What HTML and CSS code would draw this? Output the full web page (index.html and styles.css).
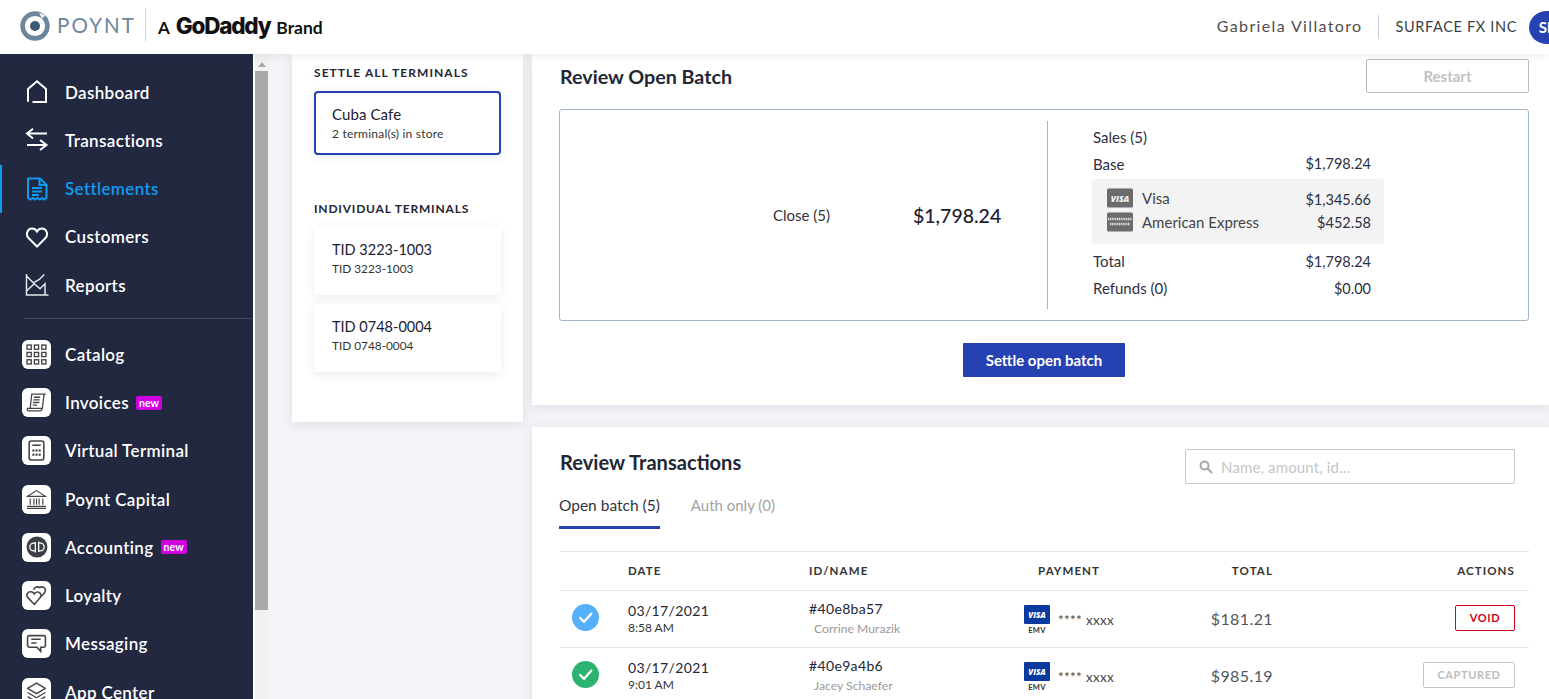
FILE: index.html
```html
<!DOCTYPE html>
<html lang="en">
<head>
<meta charset="utf-8">
<title>Poynt Settlements</title>
<link rel="stylesheet" href="styles.css">
</head>
<body>
<svg class="defs" width="0" height="0" aria-hidden="true">
  <symbol id="visa-blue" viewBox="0 0 26 19"><rect width="26" height="19" rx="1" fill="#0b3a9e"/><text x="13" y="12.5" text-anchor="middle" class="visa-txt">VISA</text></symbol>
  <symbol id="check" viewBox="0 0 28 28"><path d="M8.5 14.5l4 4 7.5-8.5" fill="none" stroke="#fff" stroke-width="2.4" stroke-linecap="round" stroke-linejoin="round"/></symbol>
</svg>
<header class="topbar">
  <div class="brand">
    <svg class="poynt-mark" viewBox="0 0 30 30"><circle cx="15" cy="15" r="12.4" fill="none" stroke="#6d869c" stroke-width="4.6"/><circle cx="15" cy="15" r="5" fill="#3e5a75"/><path d="M19 1.5l6 3-3 3z" fill="#fff"/></svg>
    <span class="poynt-word">POYNT</span>
    <span class="brand-sep"></span>
    <span class="brand-a">A</span>
    <span class="brand-gd">GoDaddy</span>
    <span class="brand-b">Brand</span>
  </div>
  <div class="account">
    <span class="user">Gabriela Villatoro</span>
    <span class="acc-sep"></span>
    <span class="merchant">SURFACE FX INC</span>
    <span class="avatar">SF</span>
  </div>
</header>
<div class="shell">
  <nav class="sidebar">
    <a class="nav-item"><span class="nav-ico"><svg viewBox="0 0 24 24" class="line"><path d="M3 21.800V9L12 1.300 21 9v12.800"/><path d="M7.500 22h14.500"/></svg></span>Dashboard</a>
    <a class="nav-item"><span class="nav-ico"><svg viewBox="0 0 24 24" class="line"><path d="M22 5.500H3M8 .8L2 5.500l6 5"/><path d="M2 17h19M15 12l6.500 5-6.500 5"/></svg></span>Transactions</a>
    <a class="nav-item active"><span class="nav-ico"><svg viewBox="0 0 24 24" class="line"><path d="M3 21V1.500h12L21.500 8v13l-2.200 1.500-2.200-1.500-2.300 1.500-2.300-1.500-2.300 1.500-2.300-1.500-2.300 1.500z"/><path d="M14.500 1.500V8h7M7 11h10M7 14.500h10M7 18h7"/></svg></span>Settlements</a>
    <a class="nav-item"><span class="nav-ico"><svg viewBox="0 0 24 24" class="line"><path d="M12 21.500L3.500 13C.5 10 2 3.500 7.300 3.500c2.300 0 3.700 1.300 4.700 3 1-1.700 2.400-3 4.700-3C22 3.500 23.500 10 20.500 13z"/></svg></span>Customers</a>
    <a class="nav-item"><span class="nav-ico"><svg viewBox="0 0 24 24" class="line thin"><path d="M1.500 1v21h22"/><path d="M1.500 3l6.800 6.800 6-3.300 5-5"/><path d="M1.500 18l7.800-7.200 5.700 5 5-5v11"/></svg></span>Reports</a>
    <hr class="nav-rule">
    <a class="nav-item"><span class="tile"><svg viewBox="0 0 20 20" class="grid-ico"><g fill="none" stroke="#444" stroke-width="1.300"><rect x="1" y="1" width="4" height="4"/><rect x="8" y="1" width="4" height="4"/><rect x="15" y="1" width="4" height="4"/><rect x="1" y="8" width="4" height="4"/><rect x="8" y="8" width="4" height="4"/><rect x="15" y="8" width="4" height="4"/><rect x="1" y="15" width="4" height="4"/><rect x="8" y="15" width="4" height="4"/><rect x="15" y="15" width="4" height="4"/></g></svg></span>Catalog</a>
    <a class="nav-item"><span class="tile"><svg viewBox="0 0 20 20" class="grid-ico"><g fill="none" stroke="#444" stroke-width="1.200"><path d="M4 15.500L5.500 2H18l-1 1.500-1.500 12.500"/><path d="M1.500 15.500h14c-.5 2-1 2.500-2 2.500H2.500c-1 0-1.500-1-1-2.500z"/><path d="M7.500 5h6M7 7.500h6M6.800 10h6M6.500 12.500h4"/></g></svg></span>Invoices<span class="pill">new</span></a>
    <a class="nav-item"><span class="tile"><svg viewBox="0 0 20 20" class="grid-ico"><g fill="none" stroke="#444" stroke-width="1.500"><rect x="3" y="1" width="14" height="18" rx="2"/><path d="M6 5h8"/></g><g fill="#444"><rect x="6" y="9" width="2" height="2"/><rect x="9" y="9" width="2" height="2"/><rect x="12" y="9" width="2" height="2"/><rect x="6" y="13" width="2" height="2"/><rect x="9" y="13" width="2" height="2"/><rect x="12" y="13" width="2" height="2"/></g></svg></span>Virtual Terminal</a>
    <a class="nav-item"><span class="tile"><svg viewBox="0 0 20 20" class="grid-ico"><g fill="none" stroke="#444" stroke-width="1.100"><path d="M1.500 7L10 1.500 18.500 7z"/><path d="M4 9v6M7.500 9v6M12.500 9v6M16 9v6M10 9v6M1 16.500h18M1 18.500h18"/></g></svg></span>Poynt Capital</a>
    <a class="nav-item"><span class="tile"><svg viewBox="0 0 20 20" class="grid-ico qb"><circle cx="10" cy="10" r="9.500" fill="#3b3f45"/><path d="M8.500 5.500v9.500M8.500 6.500H7a3.200 3.200 0 0 0 0 7h1M11.500 5v9.500M11.500 13.500H13a3.200 3.200 0 0 0 0-7h-1.500" fill="none" stroke="#fff" stroke-width="1.200"/></svg></span>Accounting<span class="pill">new</span></a>
    <a class="nav-item"><span class="tile"><svg viewBox="0 0 20 20" class="grid-ico"><g fill="none" stroke="#444" stroke-width="1.500"><path d="M8 18.500L1.800 12C-.5 9.500 2 6 4.800 6.500 6 6.700 7.300 7.500 8 8.500 9 7 11 6 12.500 7c2 1.200 2.500 3.500 1 5z"/><path d="M7.500 4.500C8 2 11 1 13 2.500c2-1.500 5.500-.5 5.500 2.500 0 2-2 4-4 6"/></g></svg></span>Loyalty</a>
    <a class="nav-item"><span class="tile"><svg viewBox="0 0 20 20" class="grid-ico"><g fill="none" stroke="#444" stroke-width="1.500"><path d="M3 2.500h14a1.500 1.500 0 0 1 1.500 1.500v8a1.500 1.500 0 0 1-1.500 1.500h-3v4l-3.500-4H3A1.500 1.500 0 0 1 1.500 12V4A1.500 1.500 0 0 1 3 2.500z"/><path d="M5 6h9M5 9.500h5"/></g></svg></span>Messaging</a>
    <a class="nav-item"><span class="tile"><svg viewBox="0 0 20 20" class="grid-ico"><g fill="none" stroke="#444" stroke-width="1.300" stroke-linejoin="round"><path d="M10 1l8.500 5-8.500 5-8.500-5z"/><path d="M1.500 10l8.500 5 8.500-5M1.500 14l8.500 5 8.500-5"/></g></svg></span>App Center</a>
  </nav>
  <div class="scrollbar"><span class="sb-arrow"></span><span class="sb-thumb"></span></div>
  <main class="content">
    <aside class="terminals">
      <h3 class="term-head">SETTLE ALL TERMINALS</h3>
      <div class="term-card selected"><div class="term-name">Cuba Cafe</div><div class="term-sub">2 terminal(s) in store</div></div>
      <h3 class="term-head second">INDIVIDUAL TERMINALS</h3>
      <div class="term-card"><div class="term-name">TID 3223-1003</div><div class="term-sub">TID 3223-1003</div></div>
      <div class="term-card"><div class="term-name">TID 0748-0004</div><div class="term-sub">TID 0748-0004</div></div>
    </aside>
    <div class="panels">
      <section class="panel batch">
        <div class="batch-head">
          <h2 class="panel-title">Review Open Batch</h2>
          <button class="btn-restart">Restart</button>
        </div>
        <div class="batch-box">
          <div class="close-side"><span class="close-label">Close (5)</span><span class="close-amt">$1,798.24</span></div>
          <div class="v-rule"></div>
          <div class="totals">
            <div class="t-row t-sales"><span>Sales (5)</span></div>
            <div class="t-row t-base"><span>Base</span><span>$1,798.24</span></div>
            <div class="cards-band">
              <div class="band-names">
                <div class="band-name"><svg class="gray-card" viewBox="0 0 26 19"><rect width="26" height="19" rx="1.500" fill="#6b6b6b"/><text x="13" y="13" text-anchor="middle" class="visa-gray">VISA</text></svg>Visa</div>
                <div class="band-name"><svg class="gray-card" viewBox="0 0 26 19"><rect width="26" height="19" rx="1.500" fill="#6b6b6b"/><path d="M1 6.500h24M3 11.500h20" stroke="#ddd" stroke-width="2.600" stroke-dasharray="1.200 .6"/></svg>American Express</div>
              </div>
              <div class="band-amts"><div>$1,345.66</div><div>$452.58</div></div>
            </div>
            <div class="t-row t-total"><span>Total</span><span>$1,798.24</span></div>
            <div class="t-row t-refund"><span>Refunds (0)</span><span>$0.00</span></div>
          </div>
        </div>
        <div class="settle-wrap"><button class="btn-settle">Settle open batch</button></div>
      </section>
      <section class="panel txns">
        <div class="txn-head">
          <h2 class="panel-title">Review Transactions</h2>
          <div class="search"><svg viewBox="0 0 14 14" class="search-ico"><circle cx="5.500" cy="5.500" r="4" fill="none" stroke="#a9a9a9" stroke-width="2"/><path d="M8.500 8.500l4 4" stroke="#a9a9a9" stroke-width="2.200" stroke-linecap="round"/></svg><span>Name, amount, id...</span></div>
        </div>
        <div class="tabs"><span class="tab on">Open batch (5)</span><span class="tab">Auth only (0)</span></div>
        <div class="table">
          <div class="row thead">
            <span></span><span>DATE</span><span>ID/NAME</span><span class="th-pay">PAYMENT</span><span class="num">TOTAL</span><span class="act">ACTIONS</span>
          </div>
          <div class="row">
            <span class="status blue"><svg viewBox="0 0 28 28"><use href="#check"/></svg></span>
            <div><div class="c1">03/17/2021</div><div class="c2">8:58 AM</div></div>
            <div><div class="c1">#40e8ba57</div><div class="c3">Corrine Murazik</div></div>
            <div class="pay"><div class="emv"><svg viewBox="0 0 26 19"><use href="#visa-blue"/></svg><span>EMV</span></div><span class="mask">**** xxxx</span></div>
            <span class="num amount">$181.21</span>
            <span class="act"><span class="badge void">VOID</span></span>
          </div>
          <div class="row">
            <span class="status green"><svg viewBox="0 0 28 28"><use href="#check"/></svg></span>
            <div><div class="c1">03/17/2021</div><div class="c2">9:01 AM</div></div>
            <div><div class="c1">#40e9a4b6</div><div class="c3">Jacey Schaefer</div></div>
            <div class="pay"><div class="emv"><svg viewBox="0 0 26 19"><use href="#visa-blue"/></svg><span>EMV</span></div><span class="mask">**** xxxx</span></div>
            <span class="num amount">$985.19</span>
            <span class="act"><span class="badge captured">CAPTURED</span></span>
          </div>
        </div>
      </section>
    </div>
  </main>
</div>
</body>
</html>
```
FILE: styles.css
```css
* { box-sizing: border-box; }
html, body { margin: 0; height: 100%; overflow: hidden; }
body { font-family: "Lato", "Noto Sans", sans-serif; color: #1f2230; background: #f3f4f8; display: flex; flex-direction: column; height: 699px; }
.defs { position: absolute; }
.visa-txt { font: italic 800 8px "Open Sans", sans-serif; fill: #fff; }
.visa-gray { font: italic 800 8.500px "Open Sans", sans-serif; fill: #f2f2f2; }

.topbar { height: 54px; flex: none; background: #fff; display: flex; justify-content: space-between; align-items: center; padding-left: 20px; box-shadow: 0 2px 8px rgba(30,40,70,.08); position: relative; z-index: 2; overflow: hidden; }
.brand { display: flex; align-items: center; height: 100%; }
.poynt-mark { width: 30px; height: 30px; margin-top: -3px; }
.poynt-word { font: 400 20.500px "Lato", sans-serif; letter-spacing: 2.100px; color: #6d869c; margin-left: 7px; margin-top: -4px; }
.brand-sep { width: 1px; height: 33px; background: #d6d6d6; margin: -5px 12px 0 9px; }
.brand-a { font: 700 17px "Lato", sans-serif; color: #111; }
.brand-gd { font: 800 22.500px/1 "Inter", sans-serif; letter-spacing: -1.250px; color: #111; margin-left: 6px; margin-top: -2px; }
.brand-b { font: 700 17.500px "Lato", sans-serif; color: #111; margin-left: 6px; }
.account { display: flex; align-items: center; margin-right: -16px; }
.user { font-size: 16px; letter-spacing: 1.350px; color: #4e4e4e; margin-top: -3px; }
.acc-sep { width: 1px; height: 24px; background: #c2d0de; margin: 0 16px; }
.merchant { font-size: 14.500px; letter-spacing: .65px; color: #3a3f47; margin-top: -2px; }
.avatar { width: 36px; height: 33px; border-radius: 50%; background: #2541b2; color: #fff; font-weight: 700; font-size: 15px; display: flex; align-items: center; justify-content: center; margin-left: 12px; flex: none; }

.shell { flex: 1; display: flex; min-height: 0; }
.sidebar { width: 253px; flex: none; background: #212840; padding: 14px 0 0; overflow: hidden; }
.nav-item { display: flex; align-items: center; height: 48.250px; color: #fff; font-size: 17px; font-weight: 600; letter-spacing: .35px; padding-left: 22px; white-space: nowrap; position: relative; }
.nav-item.active { color: #0f9bf0; }
.nav-item.active::before { content: ""; position: absolute; left: 0; top: 0; bottom: 0; width: 1.500px; background: #0f9bf0; }
.nav-ico { width: 43px; flex: none; display: flex; }
.nav-ico svg { width: 24px; height: 24px; margin-left: 3px; }
.line { fill: none; stroke: currentColor; stroke-width: 2; }
.line.thin { stroke-width: 1.500; stroke: #e8e8ec; }
.nav-rule { border: 0; border-top: 1px solid #41475c; margin: 9px 0 11px 23px; }
.tile { width: 29px; height: 29px; border-radius: 6px; background: #fff; display: flex; align-items: center; justify-content: center; margin-right: 14px; flex: none; }
.grid-ico { width: 21px; height: 21px; }
.grid-ico.qb { width: 22px; height: 22px; }
.pill { font-size: 10.500px; font-weight: 700; letter-spacing: .1px; color: #fff; background: #d100e0; border-radius: 2px; line-height: 14px; padding: 0 3px; margin-left: 7px; }

.scrollbar { width: 16px; flex: none; background: #f1f1f1; border-left: 2px solid #fff; border-right: 1px solid #f1f1f1; display: flex; flex-direction: column; align-items: center; }
.sb-arrow { width: 0; height: 0; border: 4px solid transparent; border-bottom: 5px solid #a8a8a8; margin: 4px 0 4px; flex: none; }
.sb-thumb { width: 100%; height: 539px; background: #a8a8a8; }

.content { flex: 1; min-width: 0; display: flex; align-items: flex-start; padding-left: 23px; gap: 9px; overflow: hidden; background: #f3f4f8; }
.terminals { width: 231px; flex: none; height: 368px; background: #fff; padding: 12px 22px 0; box-shadow: 0 2px 10px rgba(30,40,70,.10); }
.term-head { margin: 0; font-size: 12px; line-height: 13px; font-weight: 700; letter-spacing: 1.050px; color: #232635; }
.term-head.second { margin: 47px 0 12px; letter-spacing: .8px; }
.term-card { width: 187px; height: 68px; border-radius: 4px; background: #fff; padding: 13px 18px 0; margin-bottom: 9px; box-shadow: 0 2px 10px rgba(30,40,70,.10); }
.term-card.selected { height: 64px; margin-top: 12px; padding: 11px 16px 0; border: 2px solid #2541b2; }
.term-name { font-size: 14.500px; line-height: 19px; color: #1d2030; }
.selected .term-name { font-size: 15px; line-height: 20px; letter-spacing: .1px; }
.term-sub { font-size: 11.800px; line-height: 20px; color: #333; }
.selected .term-sub { font-size: 12px; letter-spacing: .22px; }

.panels { flex: 1; min-width: 0; display: flex; flex-direction: column; gap: 22px; }
.panel { background: #fff; padding: 0 20px 0 28px; box-shadow: 0 2px 10px rgba(30,40,70,.10); }
.batch { height: 351px; }
.batch-head { display: flex; justify-content: space-between; align-items: flex-start; height: 55px; padding-top: 5px; }
.panel-title { margin: 0; font-size: 19.700px; font-weight: 700; line-height: 36px; color: #232635; }
.btn-restart { width: 163px; height: 34px; background: #fff; border: 1px solid #bbb; border-radius: 2px; font: 700 15px "Lato", sans-serif; color: #c2c2c2; }
.batch-box { height: 212px; border: 1px solid #a3b6c9; border-radius: 3px; margin-left: -1px; display: flex; align-items: center; }
.close-side { width: 487px; display: flex; align-items: center; padding-left: 213px; }
.close-label { font-size: 15px; color: #333; width: 140px; }
.close-amt { font-size: 19.500px; font-weight: 500; color: #1d2030; }
.v-rule { width: 1px; height: 188px; background: #a3b6c9; }
.totals { width: 291px; margin-left: 45px; padding-bottom: 4px; font-size: 15px; color: #2d3040; display: flex; flex-direction: column; }
.t-row { display: flex; justify-content: space-between; padding-right: 13px; height: 27px; line-height: 27px; }
.t-row span + span { font-size: 14.500px; }
.t-base { height: 26px; line-height: 26px; }
.cards-band { background: #f3f3f3; border-radius: 3px; height: 65px; margin-left: -1px; margin-bottom: 4px; margin-top: 2px; padding: 7px 13px 0 15px; display: flex; justify-content: space-between; }
.band-name { display: flex; align-items: center; gap: 9px; height: 24px; color: #444; }
.gray-card { width: 26px; height: 20px; }
.band-amts div { height: 24px; line-height: 24px; font-size: 14.500px; text-align: right; color: #2d3040; }
.band-amts div:first-child { padding-top: 2px; }
.band-amts div:last-child { margin-top: 1px; }
.settle-wrap { display: flex; justify-content: center; margin-top: 22px; margin-left: -1px; }
.btn-settle { width: 162px; height: 34px; background: #2541b2; border: 0; border-radius: 1px; color: #fff; font: 700 15px "Lato", sans-serif; }

.txns { flex: 1; }
.txn-head { display: flex; justify-content: space-between; align-items: flex-start; padding: 22px 14px 0 0; height: 66px; }
.txn-head .panel-title { line-height: 26px; font-size: 20.100px; }
.search { width: 330px; height: 35px; border: 1px solid #c6c9cf; border-radius: 2px; display: flex; align-items: center; gap: 8px; padding-left: 13px; font-size: 15px; letter-spacing: .15px; color: #c6c6c6; margin-left: auto; }
.search-ico { width: 14px; height: 14px; flex: none; }
.tabs { display: flex; gap: 31px; height: 36px; margin-left: -1px; }
.tab { font-size: 15px; color: #a3a3a3; height: 36px; padding-top: 3px; }
.tab.on { font-size: 15.500px; color: #31343f; border-bottom: 3px solid #2541b2; }
.table { margin-top: 22px; border-top: 1px solid #dfe2e8; }
.row { display: grid; grid-template-columns: 68px 181px 214px 150px 100px 1fr; align-items: center; height: 56.800px; border-bottom: 1px solid #e3e5ea; padding-right: 14px; }
.thead { height: 39px; padding-bottom: 2px; font-size: 11.500px; font-weight: 700; letter-spacing: 1.100px; color: #333; }
.th-pay { padding-left: 15px; }
.num { text-align: right; }
.act { text-align: right; display: block; }
.status { width: 27px; height: 27px; border-radius: 50%; margin-left: 12px; display: flex; margin-top: -2px; }
.status.blue { background: #55b0fb; }
.status.green { background: #2cb36f; }
.status svg { width: 27px; height: 27px; }
.c1 { font-size: 14px; line-height: 18px; letter-spacing: .35px; color: #232635; }
.c2 { font-size: 12px; line-height: 14px; margin-top: 1px; color: #333; }
.c3 { font-size: 12.200px; line-height: 18px; color: #9a9a9a; margin-left: 5px; margin-top: 2px; }
.pay { display: flex; align-items: center; gap: 8px; padding-left: 1px; }
.emv { display: flex; flex-direction: column; align-items: center; width: 26px; margin-top: 4px; }
.emv svg { width: 26px; height: 19px; }
.emv span { font-size: 7.500px; font-weight: 700; color: #333; letter-spacing: .3px; line-height: 13px; }
.mask { font-size: 13.500px; color: #444; margin-top: 2px; letter-spacing: .3px; }
.amount { font-size: 16px; color: #52555e; letter-spacing: .4px; }
.badge { display: inline-block; vertical-align: top; font-size: 11px; font-weight: 700; letter-spacing: .6px; line-height: 24px; height: 26px; border-radius: 2px; text-align: center; margin-top: -1px; }
.void { width: 60px; color: #d0021b; border: 1px solid #d0021b; }
.captured { width: 92px; color: #bcbcbc; border: 1px solid #c6c6c6; }
```
